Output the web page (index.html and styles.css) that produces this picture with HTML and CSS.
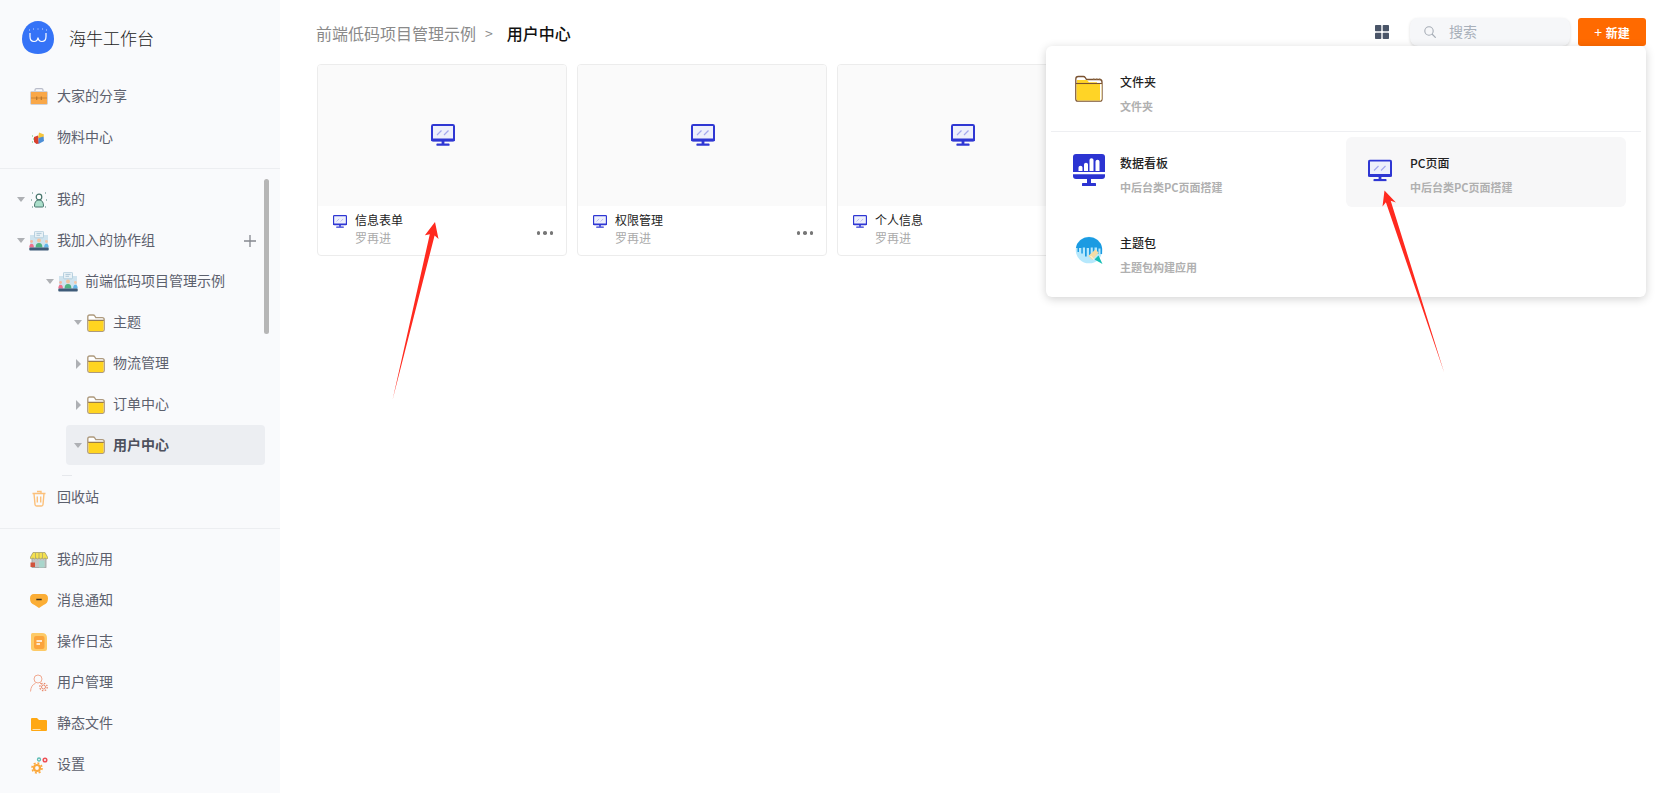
FILE: index.html
```html
<!DOCTYPE html>
<html lang="zh-CN">
<head>
<meta charset="utf-8">
<title>海牛工作台</title>
<link rel="stylesheet" href="styles.css">
</head>
<body>
<svg class="defs" xmlns="http://www.w3.org/2000/svg">
  <symbol id="monitor" viewBox="0 0 24 22">
    <rect x="1" y="1" width="22" height="15.500" rx="1.200" fill="#eef0fb" stroke="#2f37d3" stroke-width="2"/>
    <rect x="0" y="14.600" width="24" height="2.600" rx="1" fill="#2f37d3"/>
    <rect x="10.600" y="16.500" width="2.800" height="3.500" fill="#2f37d3"/>
    <rect x="5.500" y="19.600" width="13" height="2.200" rx=".6" fill="#2f37d3"/>
    <path d="M6 11 10.500 6.500M13 11 17.500 6.500" stroke="#a4a8ee" stroke-width="1.200" fill="none"/>
  </symbol>
  <symbol id="folder" viewBox="0 0 18 18">
    <path d="M.8 15.600V3q0-2 2-2h3.400q1 0 1.600 1l1 1.600h6.400q2 0 2 2v10q0 1.600-1.600 1.600H2.400q-1.600 0-1.600-1.600z" fill="#fff" stroke="#ae9a7e" stroke-width="1.400"/>
    <path d="M1.500 6.600h15v9.400q0 .9-.9.900H2.400q-.9 0-.9-.9z" fill="#ffd420"/>
    <path d="M1.200 6.300h15.600" stroke="#8a6a3c" stroke-width="1.100"/>
  </symbol>
  <symbol id="group" viewBox="0 0 20 20">
    <rect x="1" y="4" width="18" height="13" fill="#cfe3ee"/>
    <rect x="5.500" y=".3" width="9" height="6.500" rx="1" fill="#e8f1f6" stroke="#a9c6d8" stroke-width=".8"/>
    <path d="M7.500 2.400h5M7.500 4.300h3.500" stroke="#9fbdd0" stroke-width=".8"/>
    <circle cx="10" cy="9.500" r="2" fill="#f3c3a0"/>
    <path d="M6.600 16.500q0-4.400 3.400-4.400t3.400 4.400z" fill="#4fb382"/>
    <circle cx="2.600" cy="10.500" r="1.400" fill="#f5b7a0"/>
    <path d="M.3 16.500q0-3.800 2.300-3.800t2.300 3.800z" fill="#ee6f8e"/>
    <circle cx="17.400" cy="10.500" r="1.400" fill="#f5c7a8"/>
    <path d="M15.100 16.500q0-3.800 2.300-3.800t2.300 3.800z" fill="#62b5e8"/>
    <rect x=".3" y="16.600" width="19.400" height="2.900" rx=".8" fill="#3e5a78"/>
  </symbol>
</svg>

<div class="app">
  <aside class="sidebar">
    <div class="brand">
      <svg class="logo" viewBox="0 0 32 33">
        <path d="M16 0C25 0 32 8 32 18 32 28 25 33 16 33 7 33 0 28 0 18 0 8 7 0 16 0z" fill="#3573f7"/>
        <path d="M8 12v3.500Q8 20.500 12 20.500 15.500 20.500 16 16.500 16.500 20.500 20 20.500 24 20.500 24 15.500V12" fill="none" stroke="#fff" stroke-width="1.200"/>
        <path d="M7 9h1M11 8h1M15.500 8h1M20 8h1M24 9h1" stroke="#c9dafd" stroke-width="1"/>
      </svg>
      <span class="brand-name">海牛工作台</span>
    </div>

    <nav class="section">
      <a class="row flat">
        <svg class="ic" viewBox="0 0 18 18"><rect x="5" y=".6" width="8" height="5" rx="1.500" fill="none" stroke="#b9bcca" stroke-width="1.200"/><rect x=".5" y="3.500" width="17" height="13" rx="1.200" fill="#f9a748" stroke="#cfd1da"/><path d="M1 10h16" stroke="#cd8433"/><path d="M6.700 8.500v3.500M11.300 8.500v3.500" stroke="#b8752c" stroke-width="1.200"/></svg>
        <span>大家的分享</span>
      </a>
      <a class="row flat">
        <svg class="ic" viewBox="0 0 18 18"><path d="M9 3.500l5 2-1 5-5-1.500z" fill="#f6c53c"/><path d="M4 8l4-1.500 1 8-2.500.500L4 13z" fill="#d8402e"/><path d="M8.500 9l5-1.500.5 4.500-5.500 3z" fill="#4d8fd6"/><path d="M2 7h1M3 10h1M2 13h1" stroke="#5fc36a"/></svg>
        <span>物料中心</span>
      </a>
    </nav>

    <div class="tree-wrap">
      <div class="tree">
        <a class="row l0">
          <i class="caret down"></i>
          <svg class="ic" viewBox="0 0 18 18"><circle cx="9" cy="6" r="2.800" fill="#fff" stroke="#47756c" stroke-width="1.200"/><path d="M4.500 15q0-6 4.500-6t4.500 6q0 1-1 1h-7q-1 0-1-1z" fill="#abdfcb" stroke="#47756c"/><path d="M2 2h1M15 2h1M1 9h1M16 9h1M2 16h1M15 16h1" stroke="#4d8379" stroke-width="1.200"/></svg>
          <span>我的</span>
        </a>
        <a class="row l0">
          <i class="caret down"></i>
          <svg class="ic ic20"><use href="#group"/></svg>
          <span>我加入的协作组</span>
          <svg class="plus" viewBox="0 0 12 12"><path d="M6 0v12M0 6h12" stroke="#85888f" stroke-width="1.300"/></svg>
        </a>
        <a class="row l1">
          <i class="caret down"></i>
          <svg class="ic ic20"><use href="#group"/></svg>
          <span>前端低码项目管理示例</span>
        </a>
        <a class="row l2">
          <i class="caret down"></i>
          <svg class="ic"><use href="#folder"/></svg>
          <span>主题</span>
        </a>
        <a class="row l2">
          <i class="caret right"></i>
          <svg class="ic"><use href="#folder"/></svg>
          <span>物流管理</span>
        </a>
        <a class="row l2">
          <i class="caret right"></i>
          <svg class="ic"><use href="#folder"/></svg>
          <span>订单中心</span>
        </a>
        <a class="row active">
          <i class="caret down"></i>
          <svg class="ic"><use href="#folder"/></svg>
          <span>用户中心</span>
        </a>
        <div class="peek"></div>
      </div>
      <div class="scrollbar"></div>
    </div>

    <nav class="section">
      <a class="row flat">
        <svg class="ic" viewBox="0 0 18 18"><path d="M2.500 4.500h13M7 2.500h4v2M4 4.500l1 11q.1 1.500 1.500 1.500h5q1.400 0 1.500-1.500l1-11M7.300 7.500v6M10.700 7.500v6" fill="none" stroke="#fcc07a" stroke-width="1.400"/></svg>
        <span>回收站</span>
      </a>
    </nav>

    <nav class="section last">
      <a class="row flat">
        <svg class="ic" viewBox="0 0 18 18"><rect x="2" y="7" width="14" height="9.500" fill="#c2c5c4" stroke="#9a9d9c" stroke-width=".8"/><rect x="9" y="9.500" width="5.500" height="7" fill="#a9d6cc"/><path d="M3 1.500h12L18 7q-1 1.800-3 0-1.800 1.800-3 0-1.800 1.800-3 0-1.800 1.800-3 0-1.800 1.800-3 0-2 1.500-3 0z" fill="#f4e04e" stroke="#a39d70" stroke-width=".8"/><path d="M5.500 2v5M9 2v5M12.500 2v5" stroke="#a39d70" stroke-width=".7"/><rect x=".5" y="11.500" width="4.500" height="4.500" fill="#d1533c"/></svg>
        <span>我的应用</span>
      </a>
      <a class="row flat">
        <svg class="ic" viewBox="0 0 18 18"><path d="M4 2h10q4 0 4 4.500 0 5-4.500 6.500L9 16 4.500 13Q0 11.500 0 6.500 0 2 4 2z" fill="#fbad35"/><path d="M6.300 7.500h5.400" stroke="#3a3020" stroke-width="1.500"/></svg>
        <span>消息通知</span>
      </a>
      <a class="row flat">
        <svg class="ic" viewBox="0 0 18 18"><path d="M2.500 0H12q5 0 5 5v11q0 2-2 2H4q-3 0-3-3V1.500Q1 0 2.500 0z" fill="#fdca67"/><rect x="4" y="3" width="10.500" height="13" rx="2" fill="#fba43c"/><path d="M6.500 8h5.500M6.500 11h3.500" stroke="#fff" stroke-width="1.300"/></svg>
        <span>操作日志</span>
      </a>
      <a class="row flat">
        <svg class="ic" viewBox="0 0 18 18"><circle cx="8" cy="5" r="4" fill="none" stroke="#ee9f84" stroke-width=".9"/><path d="M.5 17.500Q1 11 5.500 9.300M10 9.200l1 .6" fill="none" stroke="#ee9f84" stroke-width=".9"/><circle cx="13.500" cy="13" r="2" fill="none" stroke="#e98a6c"/><circle cx="13.500" cy="13" r="3.700" fill="none" stroke="#e98a6c" stroke-width="1.300" stroke-dasharray="1.500 1.400"/></svg>
        <span>用户管理</span>
      </a>
      <a class="row flat">
        <svg class="ic" viewBox="0 0 18 18"><path d="M1 4q0-1 1-1h5l2 2h7q1 0 1 1v9q0 1-1 1H2q-1 0-1-1z" fill="#ffa813"/><path d="M2.500 14.500h8" stroke="#ffe2ae"/></svg>
        <span>静态文件</span>
      </a>
      <a class="row flat">
        <svg class="ic" viewBox="0 0 18 18"><circle cx="7" cy="12" r="3" fill="none" stroke="#fba83b" stroke-width="2.200"/><circle cx="7" cy="12" r="5" fill="none" stroke="#fba83b" stroke-width="1.600" stroke-dasharray="2 1.900"/><circle cx="9" cy="3.500" r="1.500" fill="none" stroke="#5dbcb4" stroke-width="1.300"/><circle cx="15" cy="4" r="1.800" fill="none" stroke="#ee4f55" stroke-width="1.500"/></svg>
        <span>设置</span>
      </a>
    </nav>
  </aside>

  <main class="main">
    <header class="topbar">
      <div class="crumbs">
        <span class="crumb">前端低码项目管理示例</span>
        <span class="sep">&gt;</span>
        <span class="current">用户中心</span>
      </div>
      <div class="tools">
        <svg class="grid-ic" viewBox="0 0 14 14"><rect width="6.300" height="6.300" rx=".8"/><rect x="7.700" width="6.300" height="6.300" rx=".8"/><rect y="7.700" width="6.300" height="6.300" rx=".8"/><rect x="7.700" y="7.700" width="6.300" height="6.300" rx=".8"/></svg>
        <div class="search">
          <svg class="search-ic" viewBox="0 0 12 12"><circle cx="5" cy="5" r="4.200" fill="none" stroke="#a6adb6" stroke-width="1.100"/><path d="M8 8l3.700 3.700" stroke="#a6adb6" stroke-width="1.200"/></svg>
          <span class="search-text">搜索</span>
        </div>
        <button class="new-btn"><span class="plus-sign">+</span> 新建</button>
      </div>
    </header>

    <section class="cards">
      <article class="card">
        <div class="preview"><svg class="mon-lg"><use href="#monitor"/></svg></div>
        <div class="foot">
          <svg class="mon-sm"><use href="#monitor"/></svg>
          <div class="meta"><div class="name">信息表单</div><div class="owner">罗再进</div></div>
          <div class="dots"><i></i><i></i><i></i></div>
        </div>
      </article>
      <article class="card">
        <div class="preview"><svg class="mon-lg"><use href="#monitor"/></svg></div>
        <div class="foot">
          <svg class="mon-sm"><use href="#monitor"/></svg>
          <div class="meta"><div class="name">权限管理</div><div class="owner">罗再进</div></div>
          <div class="dots"><i></i><i></i><i></i></div>
        </div>
      </article>
      <article class="card">
        <div class="preview"><svg class="mon-lg"><use href="#monitor"/></svg></div>
        <div class="foot">
          <svg class="mon-sm"><use href="#monitor"/></svg>
          <div class="meta"><div class="name">个人信息</div><div class="owner">罗再进</div></div>
          <div class="dots"><i></i><i></i><i></i></div>
        </div>
      </article>
    </section>
  </main>
</div>

<div class="menu">
  <div class="menu-top">
    <div class="item">
      <div class="item-ic">
        <svg class="big" viewBox="0 0 32 32">
          <path d="M2.800 26V6q0-2.500 2.500-2.500h5q1.200 0 2 1.200l1.200 1.800h13q2.500 0 2.500 2.500V26q0 2.200-2.200 2.200H5q-2.200 0-2.200-2.200z" fill="#fff" stroke="#7a5231" stroke-width="1.300"/>
          <path d="M3.500 10h25v16q0 1.500-1.500 1.500H5q-1.500 0-1.500-1.500z" fill="#ffd426"/>
          <path d="M27 10.500h1.500V26q0 1.500-1.500 1.500z" fill="#fff"/>
          <path d="M4 7h10l2 2.200h8V10H4z" fill="#ffd426"/>
          <path d="M3 10.500h26" stroke="#7a5231" stroke-width="1.100"/>
          <path d="M20 6h1.500M23 6h1.500M26 6h1.500" stroke="#9a7a55"/>
        </svg>
      </div>
      <div class="item-text"><div class="t">文件夹</div><div class="s">文件夹</div></div>
    </div>
  </div>
  <div class="menu-rule"></div>
  <div class="menu-grid">
    <div class="item">
      <div class="item-ic">
        <svg class="big" viewBox="0 0 32 32">
          <path d="M3 0h26q3 0 3 3v15H0V3q0-3 3-3z" fill="#2c34d2"/>
          <path d="M0 20.300h32V22q0 3-3 3H3q-3 0-3-3z" fill="#2c34d2"/>
          <rect x="14" y="25" width="4" height="4" fill="#2c34d2"/>
          <rect x="9" y="29" width="14" height="3" rx=".6" fill="#2c34d2"/>
          <path d="M5.500 13.500q0-1.800 2-1.800t2 1.800V17h-4zM11 10.500q0-1.800 2-1.800t2 1.800V17h-4zM16.500 6q0-1.800 2-1.800t2 1.800v11h-4zM22.500 7.500q0-1.800 2-1.800t2 1.800V17h-4z" fill="#fff"/>
        </svg>
      </div>
      <div class="item-text"><div class="t">数据看板</div><div class="s">中后台类PC页面搭建</div></div>
    </div>
    <div class="item hover">
      <div class="item-ic">
        <svg class="big" viewBox="-5 -5.500 32 32"><use href="#monitor" width="24" height="22"/></svg>
      </div>
      <div class="item-text"><div class="t">PC页面</div><div class="s">中后台类PC页面搭建</div></div>
    </div>
    <div class="item">
      <div class="item-ic">
        <svg class="big" viewBox="0 0 32 32">
          <circle cx="16" cy="16" r="13.300" fill="#b6e8fc"/>
          <path d="M2.900 14A13.300 13.300 0 0 1 29.100 14V20H27.500V14.500H25.500V20H24V13.500H21.500V22H19.800V13.500H17.700V21H16V14H13.700V22.500H12V13.500H9.800V19.500H8.300V14H6V18H4.500V14z" fill="#1b9be2"/>
          <path d="M22.500 15.500l3.200 3.200-6.500 7.300-4-4z" fill="#f3dca6"/>
          <path d="M17.500 22l4 4" stroke="#fff" stroke-width=".8"/>
          <path d="M21.500 25.500l4-4 4 8.500z" fill="#12bdb4"/>
        </svg>
      </div>
      <div class="item-text"><div class="t">主题包</div><div class="s">主题包构建应用</div></div>
    </div>
  </div>
</div>

<svg class="arrows" viewBox="0 0 1679 793" xmlns="http://www.w3.org/2000/svg">
  <polygon points="435,222 438.500,239 434.600,235.500 392.500,400 429.800,234.200 424.900,235.200" fill="#ff2a1f"/>
  <polygon points="1384.500,190.500 1395.900,202.500 1390.700,200.700 1444,372 1385.900,202.300 1382.500,206.500" fill="#ff2a1f"/>
</svg>
</body>
</html>
```
FILE: styles.css
```css
* { box-sizing: border-box; }

html, body {
  margin: 0;
  height: 100%;
  overflow: hidden;
  background: #fff;
}

body {
  position: relative;
  font-family: "Noto Sans CJK SC", "Liberation Sans", sans-serif;
  color: #333;
}

.defs { display: none; }

.app {
  display: flex;
  height: 793px;
}

/* Sidebar */
.sidebar {
  flex: 0 0 280px;
  display: flex;
  flex-direction: column;
  background: #f9fafc;
}

.sidebar > * { flex: none; }

.brand {
  height: 76px;
  padding: 21px 0 0 22px;
  display: flex;
  align-items: flex-start;
  gap: 15px;
}

.logo { width: 32px; height: 33px; flex: none; }

.brand-name {
  font-size: 17px;
  font-weight: 300;
  line-height: 34px;
  color: #222;
}

.section {
  padding-bottom: 10px;
  border-bottom: 1px solid #eceef1;
}

.section.last {
  padding: 10px 0 0;
  border-bottom: 0;
}

.row {
  display: flex;
  align-items: center;
  height: 41px;
  font-size: 14px;
  color: #5c606d;
  white-space: nowrap;
}

.row span { padding-bottom: 4px; }

.row.flat { padding-left: 30px; }
.row.l0 { padding-left: 17px; }
.row.l1 { padding-left: 46px; }
.row.l2 { padding-left: 74px; }

.row.active {
  margin: 0 15px 1px 66px;
  padding-left: 8px;
  height: 40px;
  border-radius: 4px;
  background: #eceef2;
  font-weight: 700;
  color: #4d515d;
}

.row.active span { padding-bottom: 2px; }

.ic {
  width: 18px;
  height: 18px;
  flex: none;
  margin-right: 9px;
}

.row.l1 .ic, .row.l2 .ic, .row.active .ic { margin-right: 8px; }

.ic.ic20 {
  width: 20px;
  height: 20px;
  margin: 0 8px 0 -1px;
}

.row.l1 .ic.ic20 { margin-right: 7px; }

.caret {
  width: 8px;
  height: 9px;
  flex: none;
  margin-right: 5px;
  display: flex;
  align-items: center;
  justify-content: center;
}

.caret::before {
  content: "";
  display: block;
  border-style: solid;
  border-color: transparent;
}

.caret.down::before {
  border-width: 5px 4.500px 0;
  border-top-color: #aeb0b4;
}

.caret.right::before {
  border-width: 5px 0 5px 5.500px;
  border-left-color: #aeb0b4;
}

.plus {
  width: 12px;
  height: 12px;
  margin-left: auto;
  margin-right: 24px;
}

.tree-wrap {
  position: relative;
  height: 298px;
  margin-top: 10px;
}

.tree { height: 298px; overflow: hidden; }

.peek {
  width: 10px;
  height: 1px;
  margin: 10px 0 0 62px;
  background: #e6e8ec;
}

.scrollbar {
  position: absolute;
  top: 0;
  right: 11px;
  width: 5px;
  height: 155px;
  border-radius: 3px;
  background: #b6b6b6;
}

/* Main */
.main { flex: 1; min-width: 0; }

.topbar {
  height: 64px;
  padding: 17px 33px 0 36px;
  display: flex;
  justify-content: space-between;
  align-items: flex-start;
}

.crumbs {
  display: flex;
  align-items: center;
  height: 32px;
  font-size: 16px;
}

.crumb { color: #8a8a8a; }
.sep { margin: 0 14px 0 9px; color: #8a8a8a; font-size: 14px; }
.current { color: #111; font-weight: 500; }

.tools { display: flex; align-items: center; height: 28px; margin-top: 1px; }

.grid-ic { width: 14px; height: 14px; fill: #4a5568; margin-right: 21px; }

.search {
  width: 160px;
  height: 28px;
  padding-left: 14px;
  display: flex;
  align-items: center;
  gap: 13px;
  border-radius: 8px;
  background: #f6f7f9;
  box-shadow: 0 1px 3px rgba(0, 0, 0, .14);
  font-size: 14px;
  color: #a8b0ba;
}

.search-ic { width: 12px; height: 12px; }
.search-text { line-height: 26px; height: 28px; }

.new-btn {
  width: 68px;
  height: 28px;
  margin-left: 8px;
  padding: 0;
  border: 0;
  border-radius: 3px;
  background: #ff6a00;
  color: #fff;
  font: 700 12px "Noto Sans CJK SC", sans-serif;
}

.plus-sign { font-weight: 400; font-size: 14px; margin-right: 1px; }

.cards {
  display: flex;
  gap: 10px;
  padding-left: 37px;
}

.card {
  width: 250px;
  height: 192px;
  border: 1px solid #ececec;
  border-radius: 4px;
  overflow: hidden;
  background: #fff;
}

.preview {
  height: 141px;
  padding: 0 0 2px 2px;
  display: flex;
  align-items: center;
  justify-content: center;
  background: #fafafa;
}

.mon-lg { width: 24px; height: 22px; }

.foot {
  display: flex;
  align-items: flex-start;
  padding: 5px 12px 0 15px;
}

.mon-sm { width: 14px; height: 13px; margin: 4px 8px 0 0; flex: none; }

.name { font-size: 12px; line-height: 18px; color: #222; }
.owner { font-size: 12px; line-height: 18px; color: #aaa; }

.dots {
  margin: 20px 1px 0 auto;
  display: flex;
  gap: 3px;
}

.dots i {
  width: 3.500px;
  height: 3.500px;
  border-radius: 50%;
  background: #777;
}

/* New menu */
.menu {
  position: absolute;
  top: 46px;
  left: 1046px;
  width: 600px;
  height: 251px;
  padding: 10px 5px;
  border-radius: 6px;
  background: #fff;
  box-shadow: 0 2px 10px rgba(0, 0, 0, .18);
}

.menu-top { padding-left: 5px; }

.menu-rule {
  height: 1px;
  margin: 5px 0;
  background: #eeeff2;
}

.menu-grid {
  display: grid;
  grid-template-columns: 280px 280px;
  gap: 10px;
  padding-left: 5px;
}

.item {
  display: flex;
  width: 280px;
  height: 70px;
  border-radius: 6px;
}

.item.hover { background: #f7f7f8; }

.item-ic { width: 64px; padding: 17px 0 0 17px; flex: none; }

.big { display: block; width: 32px; height: 32px; }

.item-text { padding-top: 16px; }

.t { font-size: 12px; line-height: 20px; font-weight: 500; color: #222; }
.s { font-size: 11px; line-height: 20px; margin-top: 4px; font-weight: 700; color: #b0b0b0; }

/* Annotation arrows */
.arrows {
  position: absolute;
  top: 0;
  left: 0;
  width: 1679px;
  height: 793px;
  pointer-events: none;
}
```
